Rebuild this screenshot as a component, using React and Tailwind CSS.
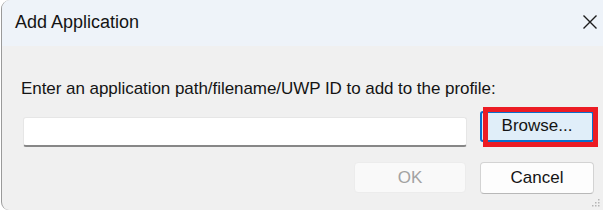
import React, { useState } from "react";

const fontStack = "font-['Liberation_Sans',Arial,sans-serif]";

function CloseIcon() {
  return (
    <svg width="16" height="16" viewBox="0 0 16 16" className="text-[#1c1c1c]">
      <path d="M1.5 1.5 L14.5 14.5 M14.5 1.5 L1.5 14.5" stroke="currentColor" strokeWidth="1.4" fill="none" />
    </svg>
  );
}

function ResizeGrip() {
  return (
    <svg width="8" height="8" viewBox="0 0 8 8" className="absolute right-[3px] bottom-[3px] text-[#b5b5b5]">
      <rect x="6" y="0" width="1.5" height="1.5" fill="currentColor" />
      <rect x="3" y="3" width="1.5" height="1.5" fill="currentColor" />
      <rect x="6" y="3" width="1.5" height="1.5" fill="currentColor" />
      <rect x="0" y="6" width="1.5" height="1.5" fill="currentColor" />
      <rect x="3" y="6" width="1.5" height="1.5" fill="currentColor" />
      <rect x="6" y="6" width="1.5" height="1.5" fill="currentColor" />
    </svg>
  );
}

export default function App() {
  const [path, setPath] = useState("");

  return (
    <div className={`w-[603px] h-[211px] bg-white overflow-hidden ${fontStack}`}>
      <div className="relative ml-px h-[210px] flex flex-col bg-[#f0f0f0] border-l border-[#9a9a9a] rounded-tl-[9px] rounded-bl-[8px] overflow-hidden">
        <div className="h-[46px] shrink-0 bg-[#eef3f9] flex items-center justify-between pl-[13px] pr-[3px] pb-[2px]">
          <h1 className="text-[18px] leading-[22px] text-[#141414]">Add Application</h1>
          <button className="w-[20px] h-[20px] flex items-center justify-center" type="button">
            <CloseIcon />
          </button>
        </div>

        <div className="flex-1 pl-[21px] pr-[8px] pt-[33px]">
          <p className="text-[17px] leading-[20px] text-[#141414] -ml-[2px] tracking-[-0.05px]">
            Enter an application path/filename/UWP ID to add to the profile:
          </p>

          <div className="flex items-start gap-[13px] mt-[12px]">
            <input
              type="text"
              value={path}
              onChange={(e) => setPath(e.target.value)}
              className="mt-[6px] w-[444px] h-[30px] bg-white border border-[#e6e6e6] border-b-2 border-b-[#878787] rounded-[3px] px-2 text-[17px] outline-none"
            />
            <div className="relative">
              <button
                type="button"
                className="w-[114px] h-[31px] bg-[#e0eef9] border-2 border-[#0a6fcc] rounded-[3px] text-[17px] text-[#141414] flex items-center justify-center pb-px"
              >
                Browse...
              </button>
              <div className="absolute left-[3px] top-[-4px] right-[-4px] bottom-[-5px] border-[5px] border-[#ec1c24] pointer-events-none" />
            </div>
          </div>

          <div className="flex justify-end gap-[14px] mt-[15px] pr-px">
            <button
              type="button"
              disabled
              className="w-[112px] h-[31px] bg-[#f9f9f9] border border-[#ececec] rounded-[4px] text-[17px] text-[#a2a2a2] flex items-center justify-center"
            >
              OK
            </button>
            <button
              type="button"
              className="w-[114px] h-[32px] bg-[#fdfdfd] border border-[#d3d3d3] border-b-[#b8b8b8] rounded-[4px] text-[17px] text-[#141414] flex items-center justify-center"
            >
              Cancel
            </button>
          </div>
        </div>

        <ResizeGrip />
      </div>
    </div>
  );
}
